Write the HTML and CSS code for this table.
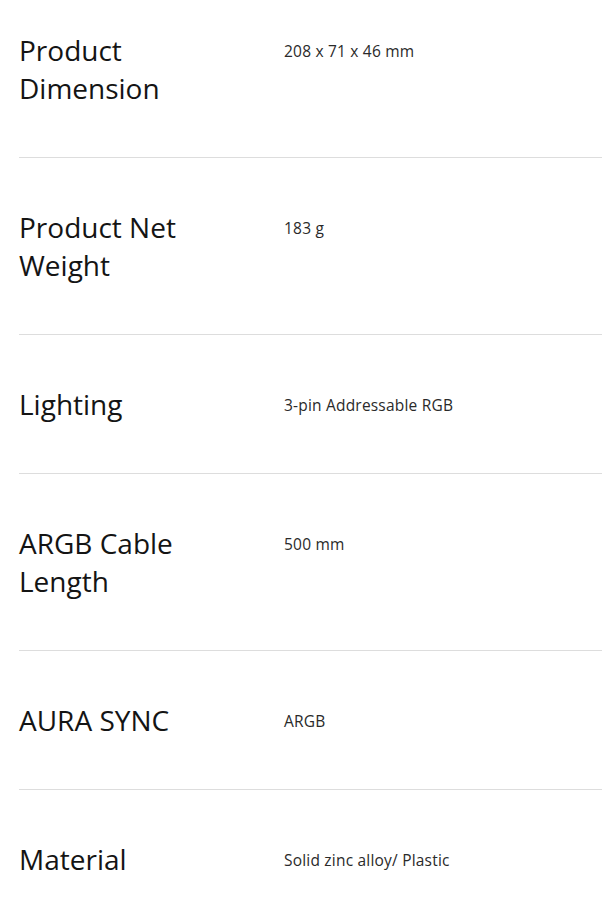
FILE: index.html
```html
<!DOCTYPE html>
<html lang="en">
<head>
<meta charset="utf-8">
<title>Specifications</title>
<link rel="stylesheet" href="styles.css">
</head>
<body>
<div class="specs">
  <div class="row first">
    <div class="label">Product<br>Dimension</div>
    <div class="value">208 x 71 x 46 mm</div>
  </div>
  <div class="row">
    <div class="label">Product Net<br>Weight</div>
    <div class="value">183 g</div>
  </div>
  <div class="row">
    <div class="label">Lighting</div>
    <div class="value">3-pin Addressable RGB</div>
  </div>
  <div class="row">
    <div class="label">ARGB Cable<br>Length</div>
    <div class="value">500 mm</div>
  </div>
  <div class="row">
    <div class="label">AURA SYNC</div>
    <div class="value">ARGB</div>
  </div>
  <div class="row last">
    <div class="label">Material</div>
    <div class="value">Solid zinc alloy/ Plastic</div>
  </div>
</div>
</body>
</html>
```

FILE: styles.css
```css
html, body {
  margin: 0;
  padding: 0;
  background: #ffffff;
}
body {
  font-family: "Open Sans", "Noto Sans", "Liberation Sans", sans-serif;
  color: #1a1a1a;
  overflow: hidden;
}
.specs {
  padding-left: 19px;
}
.row {
  display: grid;
  grid-template-columns: 265px 1fr;
  padding: 51px 0 49px;
  border-bottom: 1px solid #dddddd;
}
.row.first {
  padding-top: 32px;
}
.row.last {
  border-bottom: none;
}
.label {
  font-size: 28px;
  line-height: 38px;
  margin: -1px 0 1px;
  color: #141414;
}
.value {
  font-size: 15.5px;
  line-height: 38px;
  letter-spacing: 0.2px;
  color: #2a2a2a;
}
```
